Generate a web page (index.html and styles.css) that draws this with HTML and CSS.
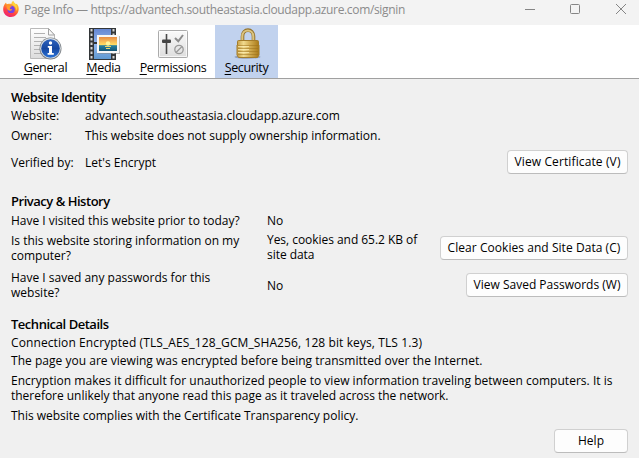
FILE: index.html
```html
<!DOCTYPE html>
<html lang="en">
<head>
<meta charset="utf-8">
<title>Page Info</title>
<link rel="stylesheet" href="styles.css">
</head>
<body>
<div class="window">
  <header class="titlebar">
    <svg class="logo" width="16" height="16" viewBox="0 0 16 16">
      <defs>
        <linearGradient id="fire" x1=".8" y1="0" x2=".3" y2="1"><stop offset="0" stop-color="#ffe347"/><stop offset=".4" stop-color="#ff9127"/><stop offset=".7" stop-color="#ff4144"/><stop offset="1" stop-color="#e9207b"/></linearGradient>
      </defs>
      <path d="M1.6 3.2 3 1.4l.7 1.8 2-.4C7 3 8 2.800 8.500 3 8.400 1.600 9.300.4 10.200 0c.5 1.500 1.600 2.200 2.700 3.300l.8-.6C15.400 4.500 15.900 6.300 15.700 8.500 15.300 12.800 12.100 16 8 16 3.600 16 .2 12.700.2 8.400.2 6.300.7 4.700 1.600 3.200Z" fill="url(#fire)"/>
      <circle cx="8.100" cy="8.400" r="3.700" fill="#7542e5"/>
      <path d="M3.400 4.500c1.200-.5 2.400-.2 3.200.5l2.200.3c-.1 1-1.800 1-2 1.700-.2 1 1 1.600 2.500 1.200-.7 1.800-3 2.100-4.300.9C4 8 3.500 6.300 3.400 4.500Z" fill="#ff9a2c"/>
      <path d="M10.200 0c.5 1.500 1.600 2.200 2.700 3.500 1.400 1.800 1.800 4.500.7 6.500-.3-2.500-1.200-4.200-3-5.500C9 3.400 8.800 1.500 10.200 0Z" fill="#ffd43d"/>
    </svg>
    <span class="caption">Page Info — https://advantech.southeastasia.cloudapp.azure.com/signin</span>
    <svg class="controls" width="108" height="18" viewBox="0 0 108 18" fill="none" stroke="#858585">
      <path d="M2 9.500h10"/><rect x="47.500" y="4.500" width="9" height="9" rx="1"/><path d="m93 4 10 10m0-10L93 14"/>
    </svg>
  </header>

  <nav class="toolbar">
    <div class="tab general">
      <svg width="32" height="32" viewBox="0 0 32 32">
        <defs>
          <linearGradient id="paper" x2="0" y2="1"><stop stop-color="#fff"/><stop offset="1" stop-color="#dcdcdc"/></linearGradient>
          <linearGradient id="info" x2="0" y2="1"><stop stop-color="#2d62bd"/><stop offset=".5" stop-color="#1747a0"/><stop offset="1" stop-color="#2872d7"/></linearGradient>
        </defs>
        <path d="M.5.5h18l6 6.500v23.500H.5Z" fill="url(#paper)" stroke="#b9b9b9"/>
        <path d="M18.500.5v6.500h6Z" fill="#f8f8f8" stroke="#a2a2a2"/>
        <path d="M4 5.500h11M4 9.500h12M4 13.500h8M4 17.500h7M4 21.500h7M4 25.500h9" stroke="#b2b2b2"/>
        <circle cx="20.500" cy="20.500" r="11" fill="#7c8186"/><circle cx="20.500" cy="20.300" r="10.300" fill="#d8dee3"/>
        <circle cx="20.500" cy="20.500" r="9.300" fill="url(#info)"/>
        <circle cx="20.500" cy="15" r="1.700" fill="#fff"/><path d="M17.800 18h4.200v7h1.800v1.700h-6.200V25H19v-5.200h-1.200Z" fill="#fff"/>
      </svg>
      <span class="label"><u>G</u>eneral</span>
    </div>
    <div class="tab media">
      <svg width="32" height="32" viewBox="0 0 32 32">
        <defs>
          <linearGradient id="film" x2="0" y2="1"><stop stop-color="#6687d2"/><stop offset=".5" stop-color="#91b6ed"/><stop offset="1" stop-color="#5f99d1"/></linearGradient>
          <linearGradient id="sky" x2="0" y2="1"><stop stop-color="#e98c44"/><stop offset=".55" stop-color="#ffdb64"/><stop offset=".62" stop-color="#267f9f"/><stop offset="1" stop-color="#135475"/></linearGradient>
        </defs>
        <path d="M1 0h27v32H1Z" fill="#333638"/>
        <path d="M6 1h17v13H6Zm0 15h17v15H6Z" fill="url(#film)"/>
        <path d="M3.500 1v30M25.500 1v30" stroke="#d5d5d5" stroke-width="2" stroke-dasharray="2.500 2"/>
        <path d="M10 8h22v18H10Z" fill="#888" opacity=".55"/><path d="M9 7h22v18H9Z" fill="#f7f7f7"/>
        <path d="M11 9h18v14H11Z" fill="url(#sky)"/><circle cx="20" cy="15.500" r="2.200" fill="#fff49a"/>
        <path d="M17 18.500h6m-5 2h4" stroke="#e8d66c"/>
      </svg>
      <span class="label"><u>M</u>edia</span>
    </div>
    <div class="tab permissions">
      <svg width="32" height="32" viewBox="0 0 32 32">
        <defs><linearGradient id="panel" x2="0" y2="1"><stop stop-color="#fafafa"/><stop offset="1" stop-color="#dedede"/></linearGradient></defs>
        <rect x="1.500" y="2.500" width="29" height="27" rx="1" fill="url(#panel)" stroke="#ababab"/>
        <path d="M2.500 3.500h27v25h-27Z" fill="none" stroke="#fff" opacity=".7"/>
        <path d="M9.500 6v20" stroke="#4a4a4a" stroke-width="1.600"/><rect x="5" y="11.500" width="9" height="3.500" rx="1" fill="#444"/>
        <path d="m18 10 3.300 3.300L26 7" fill="none" stroke="#8b8b8b" stroke-width="2"/>
        <circle cx="22" cy="21.500" r="4.200" fill="none" stroke="#999" stroke-width="1.300"/><path d="m19 24.500 6-6" stroke="#999" stroke-width="1.300"/>
      </svg>
      <span class="label"><u>P</u>ermissions</span>
    </div>
    <div class="tab security selected">
      <svg width="32" height="32" viewBox="0 0 32 32">
        <defs>
          <linearGradient id="brass"><stop stop-color="#c59c42"/><stop offset=".3" stop-color="#f1da8d"/><stop offset=".55" stop-color="#d6b259"/><stop offset="1" stop-color="#a97917"/></linearGradient>
        </defs>
        <ellipse cx="16.500" cy="29" rx="13" ry="1.700" fill="#727f9c" opacity=".6"/>
        <path d="M11.500 14V8.500C11.500 0 22.500 0 22.500 8.500V14" fill="none" stroke="#94732e" stroke-width="3.600"/>
        <path d="M11.300 14V8.500C11.300.5 22.300.5 22.300 8.500V14" fill="none" stroke="#dbc47f" stroke-width="2"/>
        <path d="M7.500 12.500h19q1 0 1 1v3.500h.5v10l-1.500 2.500h-19L6 27V17h.5v-3.500q0-1 1-1Z" fill="url(#brass)" stroke="#a37c2b"/>
        <path d="M7 17.500h20M7 20.500h20M7 23.500h20M7 26.500h20" stroke="#9b701a" opacity=".5"/>
        <path d="M7 18.500h11M7 21.500h11M7 24.500h11" stroke="#fff0b5" opacity=".7"/>
      </svg>
      <span class="label"><u>S</u>ecurity</span>
    </div>
  </nav>

  <main class="content">
    <section class="identity">
      <h2>Website Identity</h2>
      <div class="pair"><span>Website:</span><span class="t-domain">advantech.southeastasia.cloudapp.azure.com</span></div>
      <div class="pair owner"><span>Owner:</span><span>This website does not supply ownership information.</span></div>
      <div class="pair verified"><span>Verified by:</span><span>Let's Encrypt</span><button class="b-cert">View Certificate (V)</button></div>
    </section>
    <section class="privacy">
      <h2>Privacy &amp; History</h2>
      <div class="question visited"><p>Have I visited this website prior to today?</p><p class="no">No</p></div>
      <div class="question storing"><p>Is this website storing information on my<br>computer?</p><p class="answer">Yes, cookies and 65.2 KB of<br>site data</p><button class="b-clear">Clear Cookies and Site Data (C)</button></div>
      <div class="question saved"><p>Have I saved any passwords for this<br>website?</p><p>No</p><button class="b-saved">View Saved Passwords (W)</button></div>
    </section>
    <section class="technical">
      <h2>Technical Details</h2>
      <p class="t-tls">Connection Encrypted (TLS_AES_128_GCM_SHA256, 128 bit keys, TLS 1.3)</p>
      <p class="t-page">The page you are viewing was encrypted before being transmitted over the Internet.</p>
      <p class="t-encryption">Encryption makes it difficult for unauthorized people to view information traveling between computers. It is<br><span class="t-second">therefore unlikely that anyone read this page as it traveled across the network.</span></p>
      <p class="t-policy">This website complies with the Certificate Transparency policy.</p>
    </section>
    <footer><button class="b-help">Help</button></footer>
  </main>
</div>
</body>
</html>
```

FILE: styles.css
```css
* { box-sizing: border-box; }
body { margin: 0; overflow: hidden; font: 12px/15px "Open Sans", "Noto Sans", sans-serif; color: #000; }
.window { width: 639px; height: 458px; background: #f0f0f0; }
.titlebar { height: 25px; display: flex; align-items: flex-start; background: #f3f3f3; padding-left: 3px; }
.logo { margin-top: 1px; }
.caption { margin: 2px 0 0 5px; color: #8b8b8b; white-space: nowrap; letter-spacing: -.34px; }
.controls { margin-left: auto; margin-right: 8px; }
.toolbar { height: 54px; display: flex; padding-left: 15px; background: #fff; border-bottom: 1px solid #a0a0a0; }
.tab { height: 53px; display: flex; flex-direction: column; align-items: center; padding-top: 3px; }
.tab svg { flex: none; }
.general { width: 61px; }
.media { width: 55px; }
.permissions { width: 84px; }
.security { width: 63px; }
.selected { background: #c1d2ee; }
.label { font-size: 12.5px; line-height: 16px; white-space: nowrap; letter-spacing: -.35px; }
.label u { text-underline-offset: 2px; }
.content { padding: 11px 11px 0; }
h2 { margin: 0; font-size: 13px; line-height: 15px; font-weight: 600; letter-spacing: -.48px; }
p { margin: 0; white-space: nowrap; }
.pair { display: grid; grid-template-columns: 74px 1fr auto; height: 15px; margin-top: 3px; white-space: nowrap; align-items: center; }
.t-domain { letter-spacing: -.02px; }
.owner { margin-top: 5px; }
.verified { height: 24px; margin-top: 7px; }
button { height: 24px; padding: 0 0 2px; border: 1px solid #d0d0d0; border-bottom-color: #bcbcbc; border-radius: 4px; background: #fdfdfd; font: inherit; color: #000; white-space: nowrap; }
.b-cert { width: 121px; letter-spacing: .12px; }
.b-clear { width: 188px; letter-spacing: .05px; }
.b-saved { width: 162px; }
.b-help { width: 74px; }
.privacy { margin-top: 20px; }
.question { display: grid; grid-template-columns: 256px 1fr auto; align-items: center; }
.visited { margin-top: 3px; height: 15px; }
.no { padding-top: 1px; }
.storing { height: 30px; margin-top: 6px; }
.answer { margin-top: -2px; letter-spacing: -.04px; }
.saved { height: 30px; margin-top: 7px; }
.technical { margin-top: 17px; }
.t-tls { margin-top: 3px; letter-spacing: .1px; }
.t-page { margin-top: 3px; letter-spacing: .025px; }
.t-encryption { margin-top: 5px; letter-spacing: .025px; }
.t-second { letter-spacing: -.025px; }
.t-policy { margin-top: 5px; letter-spacing: -.02px; }
footer { display: flex; justify-content: flex-end; margin-top: 6px; }
```
